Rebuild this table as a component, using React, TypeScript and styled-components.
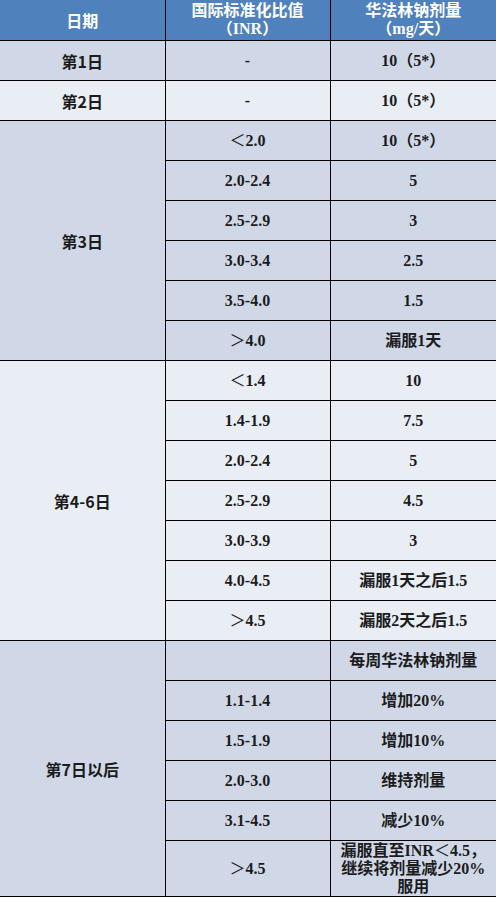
import * as React from 'react';
import styled, { createGlobalStyle } from 'styled-components';

type Tone = 'dark' | 'light';

interface Dosis {
  inr: React.ReactNode;
  mengde: React.ReactNode;
  hoy?: number;
}

interface Gruppe {
  dag: string;
  tone: Tone;
  rader: Dosis[];
}

const GlobalStyle = createGlobalStyle`
  html, body {
    margin: 0;
    padding: 0;
    background: #ffffff;
  }
`;

const toneFarge: Record<Tone, string> = {
  dark: '#d0d8e8',
  light: '#e9edf4',
};

const Tabell = styled.table`
  width: 496px;
  table-layout: fixed;
  border-collapse: collapse;
  font-family: 'Liberation Serif', 'Noto Sans CJK SC', serif;
  font-weight: bold;
  color: #1c1c1c;
  border-bottom: 2px solid #000;
`;

const Kolonne = styled.col<{ bredde: number }>`
  width: ${({ bredde }) => bredde}px;
`;

const HodeRad = styled.tr`
  height: 40px;
  background: #4f81bd;
`;

const HodeCelle = styled.th<{ sans?: boolean }>`
  padding: 1px 0 0;
  color: #ffffff;
  font-size: 16px;
  line-height: 18px;
  font-weight: bold;
  text-align: center;
  vertical-align: middle;
  border-bottom: 1.5px solid #000;
  ${({ sans }) => sans && `font-family: 'Noto Sans CJK SC', sans-serif;`}

  & + & {
    border-left: 1.5px solid #000;
  }
`;

const Rad = styled.tr<{ tone: Tone; hoy?: number }>`
  height: ${({ hoy }) => hoy ?? 40}px;
  background: ${({ tone }) => toneFarge[tone]};
`;

const Celle = styled.td<{ forste?: boolean }>`
  padding: 1px 0 0;
  font-size: 16px;
  line-height: 18px;
  text-align: center;
  vertical-align: middle;
  border-top: 1.5px solid #000;
  ${({ forste }) => !forste && `border-left: 1.5px solid #000;`}
`;

const DagCelle = styled(Celle)`
  font-family: 'Noto Sans CJK SC', 'Liberation Sans', sans-serif;
`;

const Tegn = styled.span`
  font-weight: normal;
`;

const grupper: Gruppe[] = [
  { dag: '第1日', tone: 'dark', rader: [{ inr: '-', mengde: '10（5*）' }] },
  { dag: '第2日', tone: 'light', rader: [{ inr: '-', mengde: '10（5*）' }] },
  {
    dag: '第3日',
    tone: 'dark',
    rader: [
      { inr: <><Tegn>＜</Tegn>2.0</>, mengde: '10（5*）' },
      { inr: '2.0-2.4', mengde: '5' },
      { inr: '2.5-2.9', mengde: '3' },
      { inr: '3.0-3.4', mengde: '2.5' },
      { inr: '3.5-4.0', mengde: '1.5' },
      { inr: <><Tegn>＞</Tegn>4.0</>, mengde: '漏服1天' },
    ],
  },
  {
    dag: '第4-6日',
    tone: 'light',
    rader: [
      { inr: <><Tegn>＜</Tegn>1.4</>, mengde: '10' },
      { inr: '1.4-1.9', mengde: '7.5' },
      { inr: '2.0-2.4', mengde: '5' },
      { inr: '2.5-2.9', mengde: '4.5' },
      { inr: '3.0-3.9', mengde: '3' },
      { inr: '4.0-4.5', mengde: '漏服1天之后1.5' },
      { inr: <><Tegn>＞</Tegn>4.5</>, mengde: '漏服2天之后1.5' },
    ],
  },
  {
    dag: '第7日以后',
    tone: 'dark',
    rader: [
      { inr: '', mengde: '每周华法林钠剂量' },
      { inr: '1.1-1.4', mengde: '增加20%' },
      { inr: '1.5-1.9', mengde: '增加10%' },
      { inr: '2.0-3.0', mengde: '维持剂量' },
      { inr: '3.1-4.5', mengde: '减少10%' },
      {
        inr: <><Tegn>＞</Tegn>4.5</>,
        mengde: (
          <>
            漏服直至INR<Tegn>＜</Tegn>4.5，
            <br />
            继续将剂量减少20%
            <br />
            服用
          </>
        ),
        hoy: 55,
      },
    ],
  },
];

const App: React.FunctionComponent = () => (
  <>
    <GlobalStyle />
    <Tabell>
      <colgroup>
        <Kolonne bredde={165} />
        <Kolonne bredde={165} />
        <Kolonne bredde={166} />
      </colgroup>
      <thead>
        <HodeRad>
          <HodeCelle sans>日期</HodeCelle>
          <HodeCelle>
            国际标准化比值
            <br />
            （INR）
          </HodeCelle>
          <HodeCelle>
            华法林钠剂量
            <br />
            （mg/天）
          </HodeCelle>
        </HodeRad>
      </thead>
      <tbody>
        {grupper.map(({ dag, tone, rader }) =>
          rader.map(({ inr, mengde, hoy }, i) => (
            <Rad key={`${dag}-${i}`} tone={tone} hoy={hoy}>
              {i === 0 && (
                <DagCelle forste rowSpan={rader.length}>
                  {dag}
                </DagCelle>
              )}
              <Celle>{inr}</Celle>
              <Celle>{mengde}</Celle>
            </Rad>
          ))
        )}
      </tbody>
    </Tabell>
  </>
);

export default App;
